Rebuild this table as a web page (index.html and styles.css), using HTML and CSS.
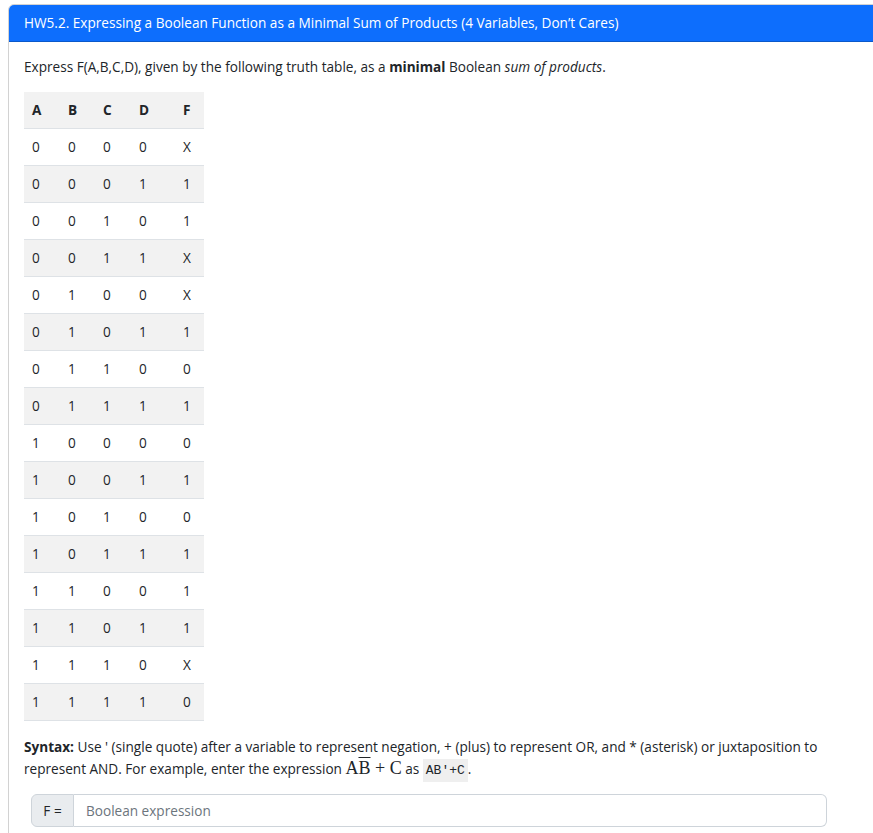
FILE: index.html
```html
<!DOCTYPE html>
<html>
<head>
<meta charset="utf-8">
<link rel="stylesheet" href="styles.css">
</head>
<body>
<div class="card">
  <div class="card-header">HW5.2. Expressing a Boolean Function as a Minimal Sum of Products (4 Variables, Don’t Cares)</div>
  <div class="card-body">
    <p class="intro">Express F(A,B,C,D), given by the following truth table, as a <strong>minimal</strong> Boolean <em>sum of products</em>.</p>
    <table class="tt">
      <thead>
        <tr><th class="ca">A</th><th class="cb">B</th><th class="cc">C</th><th class="cd">D</th><th class="cf">F</th></tr>
      </thead>
      <tbody>
        <tr><td>0</td><td>0</td><td>0</td><td>0</td><td>X</td></tr>
        <tr><td>0</td><td>0</td><td>0</td><td>1</td><td>1</td></tr>
        <tr><td>0</td><td>0</td><td>1</td><td>0</td><td>1</td></tr>
        <tr><td>0</td><td>0</td><td>1</td><td>1</td><td>X</td></tr>
        <tr><td>0</td><td>1</td><td>0</td><td>0</td><td>X</td></tr>
        <tr><td>0</td><td>1</td><td>0</td><td>1</td><td>1</td></tr>
        <tr><td>0</td><td>1</td><td>1</td><td>0</td><td>0</td></tr>
        <tr><td>0</td><td>1</td><td>1</td><td>1</td><td>1</td></tr>
        <tr><td>1</td><td>0</td><td>0</td><td>0</td><td>0</td></tr>
        <tr><td>1</td><td>0</td><td>0</td><td>1</td><td>1</td></tr>
        <tr><td>1</td><td>0</td><td>1</td><td>0</td><td>0</td></tr>
        <tr><td>1</td><td>0</td><td>1</td><td>1</td><td>1</td></tr>
        <tr><td>1</td><td>1</td><td>0</td><td>0</td><td>1</td></tr>
        <tr><td>1</td><td>1</td><td>0</td><td>1</td><td>1</td></tr>
        <tr><td>1</td><td>1</td><td>1</td><td>0</td><td>X</td></tr>
        <tr><td>1</td><td>1</td><td>1</td><td>1</td><td>0</td></tr>
      </tbody>
    </table>
    <p class="syntax"><strong>Syntax:</strong> Use ' (single quote) after a variable to represent negation, + (plus) to represent OR, and * (asterisk) or juxtaposition to represent AND. For example, enter the expression <span class="math">A<span class="bar">B</span> + C</span> as <code>AB'+C</code>.</p>
    <div class="input-group">
      <span class="addon">F&nbsp;=</span>
      <input class="field" type="text" placeholder="Boolean expression">
    </div>
  </div>
</div>
</body>
</html>
```
FILE: styles.css
```css
html, body {
  margin: 0;
  padding: 0;
  overflow: hidden;
  background: #fff;
}
body {
  font-family: "Open Sans", "Noto Sans", sans-serif;
  font-size: 13.6px;
  line-height: 1.6;
  color: #212529;
}
.card {
  margin: 4px -20px 0 8px;
  border: 1px solid #d2d2d2;
  border-radius: 6px;
  overflow: hidden;
}
.card-header {
  background: #0d6efd;
  color: #fff;
  height: 37px;
  box-sizing: border-box;
  padding: 0 15px;
  display: flex;
  align-items: center;
  border-bottom: 1px solid #0a58ca;
}
.card-body {
  padding: 14px 15px 20px;
}
.intro {
  margin: 0 0 14px;
}
.tt {
  border-collapse: collapse;
  width: 180px;
  margin-bottom: 15px;
}
.tt th, .tt td {
  height: 37px;
  box-sizing: border-box;
  padding: 0 0 0 8px;
  text-align: left;
  border-bottom: 1px solid #dee2e6;
}
.tt th {
  font-weight: 700;
  background: #f2f2f2;
}
.tt tbody tr:nth-child(even) td {
  background: #f2f2f2;
}
.ca { width: 36px; }
.cb { width: 35px; }
.cc { width: 36px; }
.cd { width: 44px; }
.cf { width: 29px; }
.syntax {
  margin: 0 0 14px;
  line-height: 22px;
}
.math {
  font-family: "Liberation Serif", "DejaVu Serif", serif;
  font-size: 18px;
  line-height: 1;
}
.bar {
  text-decoration: overline;
  text-decoration-thickness: 1px;
}
code {
  font-family: "Liberation Mono", monospace;
  font-size: 13px;
  line-height: 1;
  background: #efefef;
  padding: 4px 3px;
  color: #212529;
}
.input-group {
  display: flex;
  width: 796px;
  margin-left: 7px;
  height: 33px;
}
.addon {
  display: flex;
  align-items: center;
  justify-content: center;
  width: 43px;
  padding: 0;
  white-space: nowrap;
  background: #e9ecef;
  border: 1px solid #ced4da;
  border-radius: 6px 0 0 6px;
  box-sizing: border-box;
}
.field {
  flex: 1;
  border: 1px solid #ced4da;
  border-left: none;
  border-radius: 0 6px 6px 0;
  padding: 0 12px;
  font: inherit;
  color: #212529;
  outline: none;
}
.field::placeholder {
  color: #6c757d;
}
```
